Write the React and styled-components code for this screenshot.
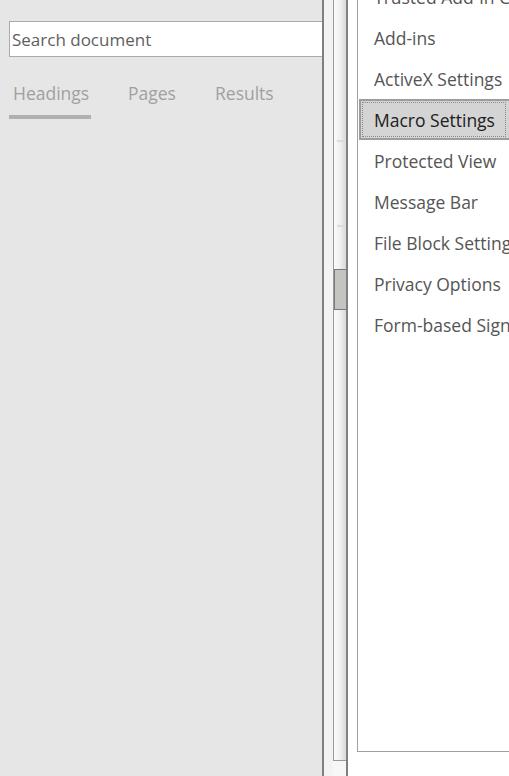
import React from 'react';
import styled, { createGlobalStyle } from 'styled-components';

const GlobalStyle = createGlobalStyle`
  html, body {
    margin: 0;
    padding: 0;
    background: #ffffff;
    font-family: "Open Sans", "Noto Sans", sans-serif;
  }
`;

const Screen = styled.div`
  display: flex;
  width: 509px;
  height: 776px;
  overflow: hidden;
  background: #ffffff;
`;

const NavPane = styled.div`
  flex: 0 0 324px;
  background: #e6e6e6;
  border-right: 2px solid #808080;
  padding: 21px 0 0 9px;
  box-sizing: border-box;
  overflow: hidden;
`;

const SearchBox = styled.div`
  width: 340px;
  height: 36px;
  box-sizing: border-box;
  border: 1px solid #ababab;
  background: #ffffff;
  display: flex;
  align-items: center;
  padding-left: 2px;
  font-size: 17px;
  color: #606060;
`;

const Tabs = styled.div`
  display: flex;
  margin-top: 24px;
`;

const Tab = styled.div`
  padding: 0 4px;
  margin-right: ${p => p.gap}px;
  font-size: 17.5px;
  color: #a0a0a0;
  height: 38px;
  box-sizing: border-box;
  border-bottom: 4px solid ${p => (p.active ? '#b0b0b0' : 'transparent')};
  width: ${p => p.w}px;
`;

const Gutter = styled.div`
  flex: 0 0 9px;
  background: #f3f3f3;
`;

const ScrollColumn = styled.div`
  flex: 0 0 15px;
  box-sizing: border-box;
  border-right: 2px solid #808080;
  background: #f7f7f7;
`;

const Track = styled.div`
  height: 761px;
  box-sizing: border-box;
  border-left: 1px solid #9a9a9a;
  border-bottom: 1px solid #9a9a9a;
  background: linear-gradient(to right, #fbfbfb 0%, #f0f0f0 50%, #d8d8d8 100%);
  display: flex;
  flex-direction: column;
  align-items: flex-end;
`;

const Tick = styled.div`
  width: 9px;
  height: 2px;
  margin-top: ${p => p.top}px;
  background: #dcdcdc;
`;

const Thumb = styled.div`
  align-self: stretch;
  margin-top: ${p => p.top}px;
  height: 41px;
  box-sizing: border-box;
  border: 1px solid #7a7a7a;
  border-right: none;
  background: #c4c4c0;
`;

const Spacer = styled.div`
  flex: 0 0 9px;
  background: #ffffff;
`;

const ListBox = styled.div`
  flex: 1;
  height: 752px;
  box-sizing: border-box;
  border-left: 1px solid #a0a0a0;
  border-bottom: 1px solid #a0a0a0;
  overflow: hidden;
  background: #ffffff;
`;

const List = styled.div`
  margin-top: -24px;
  display: flex;
  flex-direction: column;
`;

const Item = styled.div`
  height: 41px;
  box-sizing: border-box;
  display: flex;
  align-items: center;
  padding-left: ${p => (p.selected ? '13px' : '16px')};
  margin-left: ${p => (p.selected ? '1px' : '0')};
  font-size: 17.5px;
  white-space: nowrap;
  color: ${p => (p.selected ? '#202020' : '#555555')};
  background: ${p => (p.selected ? '#d4d4d4' : 'transparent')};
  border: ${p => (p.selected ? '2px solid #9c9c9c' : 'none')};
  border-right: none;
  outline: ${p => (p.selected ? '1px dotted #8a8a8a' : 'none')};
  outline-offset: -4px;
`;

const items = [
  'Trusted Add-in Catalogs',
  'Add-ins',
  'ActiveX Settings',
  'Macro Settings',
  'Protected View',
  'Message Bar',
  'File Block Settings',
  'Privacy Options',
  'Form-based Sign-in',
];

export default function App() {
  return (
    <Screen>
      <GlobalStyle />
      <NavPane>
        <SearchBox>Search document</SearchBox>
        <Tabs>
          <Tab active w={82} gap={33}>Headings</Tab>
          <Tab w={54} gap={33}>Pages</Tab>
          <Tab w={70} gap={0}>Results</Tab>
        </Tabs>
      </NavPane>
      <Gutter />
      <ScrollColumn>
        <Track>
          <Tick top={140} />
          <Tick top={83} />
          <Thumb top={42} />
        </Track>
      </ScrollColumn>
      <Spacer />
      <ListBox>
        <List>
          {items.map(label => (
            <Item key={label} selected={label === 'Macro Settings'}>
              {label}
            </Item>
          ))}
        </List>
      </ListBox>
    </Screen>
  );
}
